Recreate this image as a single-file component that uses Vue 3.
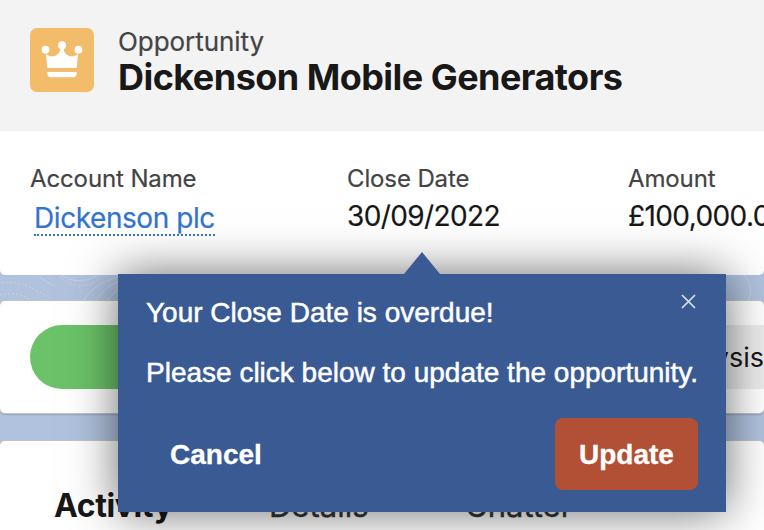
<script setup>
const tabs = ['Activity', 'Details', 'Chatter']
</script>

<template>
  <div class="page">
    <header class="header">
      <svg class="badge" viewBox="0 0 64 64" aria-hidden="true">
        <rect width="64" height="64" rx="7" fill="#f3bc6b" />
        <g fill="#fff">
          <circle cx="15.5" cy="21.7" r="3.9" />
          <circle cx="32" cy="17.3" r="4" />
          <circle cx="48.400" cy="21.700" r="3.900" />
          <path d="M13.800 23C17 31 30.800 30.500 30.400 19h3.200C33.200 30.500 47 31 50.200 23L48 26.500 46.800 39.300a1 1 0 0 1-1 .8H18.200a1 1 0 0 1-1-.8L16 26.500z" />
          <path d="M17.300 44h29.400v1.500c0 2.200-1.300 3.700-3.500 3.700H20.800c-2.200 0-3.500-1.500-3.500-3.700z" />
        </g>
      </svg>
      <div class="heading">
        <div class="kind">Opportunity</div>
        <h1 class="title">Dickenson Mobile Generators</h1>
      </div>
    </header>

    <section class="fields">
      <div class="field">
        <div class="label">Account Name</div>
        <a class="link">Dickenson plc</a>
      </div>
      <div class="field">
        <div class="label">Close Date</div>
        <div class="value">30/09/2022</div>
      </div>
      <div class="field">
        <div class="label">Amount</div>
        <div class="value">£100,000.00</div>
      </div>
    </section>

    <div class="gap">
      <svg class="contours" width="764" height="26" fill="none">
        <g stroke="#d9d5c8" stroke-width="1" stroke-dasharray="1.500 2.500">
          <path d="M2 8C22 5 30 13 52 23M0 20c12-3 22-1 31 5M60 2c14 12 28 11 39 2" />
        </g>
        <g stroke="#c3d0e4" stroke-width="1">
          <path d="M40 1c3 5 9 7 15 10M61 0c12 7 22 8 36 1M84 25c9-14 19-18 34-23M96 25c6-9 12-14 22-18M107 25l11-11M744 0c8 9 8 17 4 26" />
        </g>
      </svg>
    </div>

    <section class="path-card">
      <div class="path">
        <div class="stage done"></div>
        <div class="stage next">Needs Analysis</div>
      </div>
    </section>

    <div class="gap second"></div>

    <nav class="tabs">
      <span v-for="(t, i) in tabs" :key="t" class="tab" :class="'t' + i">{{ t }}</span>
    </nav>

    <div class="popover" role="dialog">
      <svg class="arrow" width="36" height="22" viewBox="0 0 36 22"><path d="M0 22 18 0l18 22z" fill="#3a5a94" /></svg>
      <svg class="close" width="15" height="15" viewBox="0 0 15 15"><path d="M1 1l13 13M14 1 1 14" stroke="#dbe2ee" stroke-width="1.700" /></svg>
      <p class="msg">Your Close Date is overdue!</p>
      <p class="msg">Please click below to update the opportunity.</p>
      <div class="actions">
        <button class="cancel">Cancel</button>
        <button class="update">Update</button>
      </div>
    </div>
  </div>
</template>

<style>
body {
  margin: 0;
  overflow: hidden;
}
</style>

<style scoped>
.page {
  position: relative;
  width: 764px;
  height: 530px;
  overflow: hidden;
  background: #b0c2de;
  font-family: Inter, "Liberation Sans", sans-serif;
  color: #181818;
  white-space: nowrap;
}
.header {
  display: flex;
  gap: 24px;
  height: 131px;
  padding: 28px 0 0 30px;
  box-sizing: border-box;
  background: #f3f3f3;
}
.badge {
  width: 64px;
  height: 64px;
}
.kind {
  margin-top: -1px;
  font-size: 26px;
  line-height: 30px;
  letter-spacing: -0.05px;
  color: #444;
  -webkit-text-stroke: 0.2px #444;
}
.title {
  margin: 2px 0 0;
  font-size: 36px;
  line-height: 36px;
  font-weight: 700;
  letter-spacing: -0.54px;
}
.fields {
  display: grid;
  grid-template-columns: 317px 281px 1fr;
  height: 144px;
  padding: 34px 0 0 30px;
  box-sizing: border-box;
  background: #fff;
  border-radius: 0 0 5px 5px;
}
.label {
  font-size: 24px;
  line-height: 28px;
  letter-spacing: -0.12px;
  color: #444;
  -webkit-text-stroke: 0.2px #444;
}
.value {
  margin-top: 6px;
  font-size: 28px;
  line-height: 34px;
  letter-spacing: -0.6px;
  -webkit-text-stroke: 0.2px #181818;
}
.link {
  display: inline-block;
  margin: 9px 0 0 4px;
  font-size: 28px;
  line-height: 32px;
  letter-spacing: -0.43px;
  color: #3274d0;
  border-bottom: 2px dotted #3274d0;
  -webkit-text-stroke: 0.2px #3274d0;
}
.gap {
  height: 26px;
}
.contours {
  display: block;
}
.path-card {
  height: 112px;
  padding: 24px 0 0 30px;
  box-sizing: border-box;
  background: #fff;
  border-radius: 5px;
  box-shadow: 0 0 0 1px #c2c3c5, 0 2px 2px rgba(0, 0, 0, 0.16);
}
.path {
  display: flex;
  height: 64px;
}
.stage.done {
  width: 300px;
  background: #6bc268;
  border-radius: 32px 0 0 32px;
}
.stage.next {
  display: flex;
  flex: 1;
  align-items: center;
  justify-content: flex-end;
  background: #ececec;
  font-size: 27px;
}
.gap.second {
  height: 28px;
}
.tabs {
  display: flex;
  height: 89px;
  padding: 48px 0 0 54px;
  box-sizing: border-box;
  background: #fff;
  border-radius: 5px 5px 0 0;
  box-shadow: 0 0 0 1px #c2c3c5;
  font-size: 31px;
  line-height: 34px;
  color: #333;
}
.t0 {
  width: 215px;
  font-size: 32px;
  font-weight: 700;
  letter-spacing: -0.4px;
  color: #181818;
}
.t1 {
  width: 196px;
}
.tab:not(.t0) {
  -webkit-text-stroke: 0.4px #333;
}
.popover {
  position: absolute;
  left: 118px;
  top: 274px;
  width: 608px;
  height: 238px;
  padding: 21px 28px 0 28px;
  box-sizing: border-box;
  background: #3a5a94;
  box-shadow: 0 0 45px rgba(0, 0, 0, 0.58);
  color: #fff;
  font-family: "Liberation Sans", Arial, sans-serif;
}
.arrow {
  position: absolute;
  left: 286px;
  top: -22px;
}
.close {
  position: absolute;
  left: 563px;
  top: 20px;
}
.msg {
  margin: 0 0 24px;
  font-size: 28px;
  line-height: 36px;
  -webkit-text-stroke: 0.5px #fff;
}
.actions {
  display: flex;
  justify-content: space-between;
  padding-top: 3px;
}
.cancel,
.update {
  height: 72px;
  padding: 2px 0 0;
  border: 0;
  border-radius: 8px;
  background: none;
  color: #fff;
  font: 700 28px/70px "Liberation Sans", Arial, sans-serif;
  -webkit-text-stroke: 0.3px #fff;
}
.cancel {
  margin-left: 24px;
}
.update {
  width: 143px;
  background: #b25035;
}
</style>
